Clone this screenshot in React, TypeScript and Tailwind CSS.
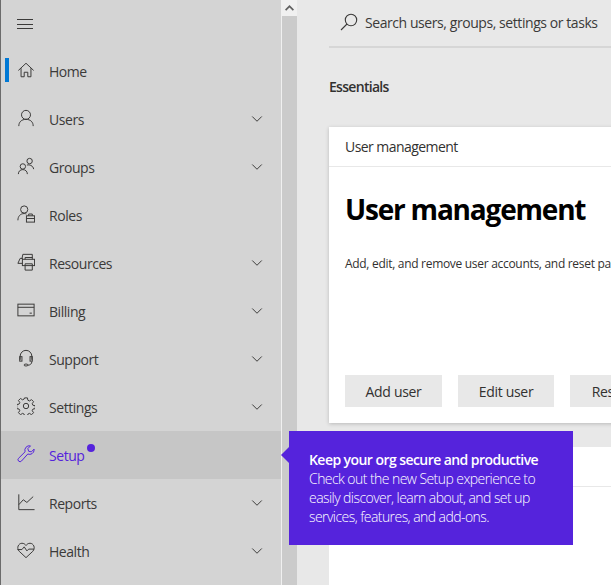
import type { ReactNode } from 'react';
import { ChevronDown } from 'lucide-react';

const icon = {
  width: 18,
  height: 18,
  viewBox: '0 0 20 20',
  fill: 'none',
  stroke: 'currentColor',
  strokeWidth: 1.1,
};

const HomeIcon = () => (
  <svg {...icon}>
    <path d="M1.500 10.500 10 2.500l8.500 8M4.500 8V17.500h3.500v-5h4v5h3.500V8" />
  </svg>
);
const UserIcon = () => (
  <svg {...icon}>
    <circle cx="10" cy="6.500" r="5" />
    <path d="M2 19c0-4.500 3-7.500 8-7.500s8 3 8 7.500" />
  </svg>
);
const GroupsIcon = () => (
  <svg {...icon}>
    <circle cx="6.500" cy="10.500" r="3" />
    <path d="M1.500 19c0-3 2-5 5-5s5 2 5 5" />
    <circle cx="14" cy="4.500" r="3" />
    <path d="M11 9c3-1 7 .8 7.500 4.500" />
  </svg>
);
const RolesIcon = () => (
  <svg {...icon}>
    <circle cx="8" cy="5" r="4" />
    <path d="M1 17c0-4.500 2.800-7.500 7-7.500 1 0 1.800.2 2.500.5" />
    <rect x="10.500" y="12" width="9" height="7" />
    <path d="M13 12v-2h4v2M10.500 15h9" />
  </svg>
);
const ResourcesIcon = () => (
  <svg {...icon}>
    <path d="M5.500 6.500 6.500 1.500h10.500v4M1 11.500 3.500 6h3M1 11.500h5" />
    <rect x="6" y="7" width="13.500" height="7" />
    <path d="M9 7V5h8v2M9 12h8v7H9z" />
  </svg>
);
const BillingIcon = () => (
  <svg {...icon}>
    <rect x="1" y="3.500" width="18" height="13" />
    <path d="M1 7h18M14 13.500h2.500" />
  </svg>
);
const SupportIcon = () => (
  <svg {...icon}>
    <path d="M3.500 12V8a6.500 6.500 0 0 1 13 0v4M16.500 14c0 2.500-2 4-4.500 4" />
    <rect x="3" y="8.500" width="2.500" height="5" />
    <rect x="14.500" y="8.500" width="2.500" height="5" />
    <rect x="8" y="16.800" width="4" height="2" rx="1" />
  </svg>
);
const SettingsIcon = () => (
  <svg {...icon}>
    <circle cx="10" cy="10" r="3" />
    <path d="M8.400 1h3.200l.5 2.600 1.800.8 2.200-1.500 2.300 2.300-1.500 2.200.8 1.800 2.600.5v3.200l-2.600.5-.8 1.800 1.500 2.200-2.300 2.300-2.200-1.500-1.800.8-.5 2.600H8.400l-.5-2.600-1.800-.8-2.200 1.500-2.300-2.300 1.500-2.200-.8-1.800-2.600-.5V8.400l2.600-.5.800-1.800-1.500-2.200 2.300-2.300 2.200 1.500 1.800-.8z" />
  </svg>
);
const WrenchIcon = () => (
  <svg {...icon}>
    <path d="M19 5.500a5 5 0 0 1-7 4.500L5 17.800a2.200 2.200 0 0 1-3.300-3L9 7.500A5 5 0 0 1 15 1l-3 3 1 3 3 .6L19 4.500z" />
  </svg>
);
const ReportsIcon = () => (
  <svg {...icon}>
    <path d="M2 1.500V18.500H19.500M2 13l5-5.500 4 3 7-6.500" />
  </svg>
);
const HealthIcon = () => (
  <svg {...icon}>
    <path d="M10 18.500 2.500 11.500C-1 7.500 1.800 2.500 5.500 2.500c2 0 3.500 1 4.500 2.500 1-1.500 2.500-2.500 4.500-2.500 3.700 0 6.500 5 3 9z" />
    <path d="M.5 9.500h5l2.500-3 3 4.500 2-2h6" />
  </svg>
);

const items: { label: string; icon: ReactNode; chevron?: boolean; selected?: boolean; active?: boolean }[] = [
  { label: 'Home', icon: <HomeIcon />, selected: true },
  { label: 'Users', icon: <UserIcon />, chevron: true },
  { label: 'Groups', icon: <GroupsIcon />, chevron: true },
  { label: 'Roles', icon: <RolesIcon /> },
  { label: 'Resources', icon: <ResourcesIcon />, chevron: true },
  { label: 'Billing', icon: <BillingIcon />, chevron: true },
  { label: 'Support', icon: <SupportIcon />, chevron: true },
  { label: 'Settings', icon: <SettingsIcon />, chevron: true },
  { label: 'Setup', icon: <WrenchIcon />, active: true },
  { label: 'Reports', icon: <ReportsIcon />, chevron: true },
  { label: 'Health', icon: <HealthIcon />, chevron: true },
];

function NavItem({ item }: { item: (typeof items)[number] }) {
  return (
    <div
      className={`relative flex h-12 items-center pl-[16px] pr-[15px] ${
        item.active ? 'bg-[#c6c6c6] text-[#5523dc]' : 'text-[#3b3a39]'
      }`}
    >
      {item.selected && <div className="absolute left-[4px] top-[11px] h-6 w-1 bg-[#0078d4]" />}
      <div className="mb-[2px] flex w-8 shrink-0 items-center">{item.icon}</div>
      <span className="text-[14px] tracking-[-0.45px]">{item.label}</span>
      {item.active && <div className="ml-[3px] mb-[14px] h-2 w-2 rounded-full bg-[#5523dc]" />}
      {item.chevron && <ChevronDown className="ml-auto text-[#3b3a39]" size={18} strokeWidth={1.3} />}
    </div>
  );
}

export default function App() {
  return (
    <div className="relative flex h-[585px] w-[611px] overflow-hidden bg-[#e8e8e8] font-['Open_Sans',sans-serif]">
      <aside className="flex w-[282px] shrink-0 flex-col border-l border-r border-l-[#6b6b6b] border-r-[#f0f0f0] bg-[#d4d4d4]">
        <div className="flex h-[47px] items-center pl-[16px] text-[#3b3a39]">
          <svg width="17" height="12" viewBox="0 0 17 12" stroke="currentColor" strokeWidth="1">
            <path d="M0 1.500h16M0 6.500h16M0 10.500h16" />
          </svg>
        </div>
        {items.map((item) => (
          <NavItem key={item.label} item={item} />
        ))}
      </aside>

      <div className="w-[15px] shrink-0 bg-[#cbcbcb]">
        <div className="flex h-4 items-center justify-center bg-[#f0f0f0]">
          <svg width="9" height="6" viewBox="0 0 9 6" fill="#606060">
            <path d="M4.500 0 9 4.500 7.800 5.700 4.500 2.400 1.200 5.700 0 4.500z" />
          </svg>
        </div>
      </div>

      <main className="min-w-0 flex-1 pl-[32px]">
        <div className="flex h-[48px] items-center gap-[7px] border-b-2 border-[#d6d6d6] pl-[11px] pb-[2px] text-[#3b3a39]">
          <svg width="18" height="18" viewBox="0 0 18 18" fill="none" stroke="currentColor" strokeWidth="1.100">
            <circle cx="11" cy="7" r="5.700" />
            <path d="M7 11 1 17" />
          </svg>
          <span className="whitespace-nowrap text-[14px] tracking-[-0.43px]">Search users, groups, settings or tasks</span>
        </div>
        <h2 className="mt-[29px] text-[14px] font-semibold leading-5 tracking-[-0.7px] text-[#323130]">Essentials</h2>

        <section className="mt-[30px] h-[296px] w-[320px] overflow-hidden bg-white shadow-[0_1px_4px_rgba(0,0,0,0.2)]">
          <div className="flex h-10 items-center border-b border-[#e8e8e8] pl-4 text-[14px] font-medium tracking-[-0.55px] text-[#323130]">
            User management
          </div>
          <h1 className="mt-[22px] whitespace-nowrap pl-4 text-[28px] font-bold leading-[40px] tracking-[-1.2px] text-black">
            User management
          </h1>
          <p className="mt-[26px] whitespace-nowrap pl-4 text-[12px] tracking-[-0.3px] text-[#323130]">
            Add, edit, and remove user accounts, and reset passwords.
          </p>
          <div className="mt-[102px] flex gap-4 pl-4">
            <Button label="Add user" width="w-[97px]" />
            <Button label="Edit user" width="w-[96px]" />
            <Button label="Reset password" width="w-[142px]" />
          </div>
        </section>

        <section className="mt-[24px] h-[200px] w-[320px] bg-white">
          <div className="h-10 border-b border-[#e8e8e8]" />
        </section>
      </main>

      {/* teaching callout over the nav and content */}
      <div className="absolute left-[289px] top-[431px] h-[114px] w-[284px] bg-[#5523dc] pl-[20px] pt-[19px] text-[14px] leading-[19px] tracking-[-0.56px] text-white">
        <div className="absolute left-[-8px] top-[16px] h-0 w-0 border-y-[8px] border-r-[8px] border-y-transparent border-r-[#5523dc]" />
        <p className="font-semibold">Keep your org secure and productive</p>
        <p className="font-light">Check out the new Setup experience to</p>
        <p className="font-light">easily discover, learn about, and set up</p>
        <p className="font-light">services, features, and add-ons.</p>
      </div>
    </div>
  );
}

function Button({ label, width }: { label: string; width: string }) {
  return (
    <div className={`flex h-8 shrink-0 items-center justify-center whitespace-nowrap bg-[#e8e8e8] text-[14px] tracking-[-0.3px] text-[#323130] ${width}`}>
      {label}
    </div>
  );
}
